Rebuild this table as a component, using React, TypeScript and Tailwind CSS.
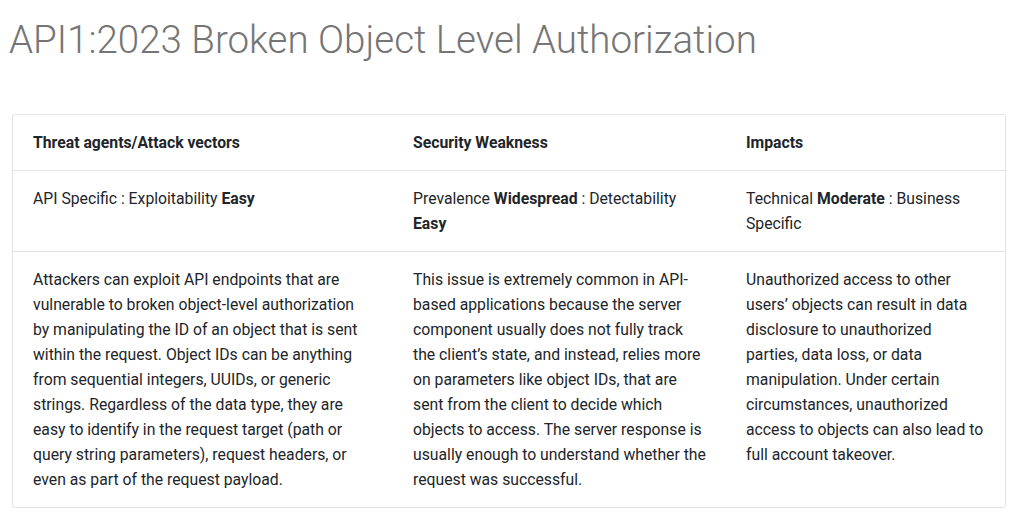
export default function App() {
  return (
    <div className="min-h-screen bg-white font-['Roboto',sans-serif] text-[#212529]">
      <h1 className="pl-[9px] pt-[16px] text-[38.5px] leading-[48px] font-light text-[#757575]">
        API1:2023 Broken Object Level Authorization
      </h1>
      <div className="ml-[12px] mt-[50px] w-[994px] rounded-[3px] border border-[#e3e3e3] text-[15.75px] leading-[25px]">
        <div className="grid grid-cols-[380px_333px_1fr] border-b border-[#e3e3e3]">
          <div className="px-[20px] py-[15px] font-bold">Threat agents/Attack vectors</div>
          <div className="pl-[20px] pr-[19px] py-[15px] font-bold">Security Weakness</div>
          <div className="px-[20px] py-[15px] font-bold">Impacts</div>
        </div>
        <div className="grid grid-cols-[380px_333px_1fr] border-b border-[#e3e3e3]">
          <div className="px-[20px] py-[15px]">
            API Specific : Exploitability <b>Easy</b>
          </div>
          <div className="pl-[20px] pr-[19px] py-[15px]">
            Prevalence <b>Widespread</b> : Detectability <b>Easy</b>
          </div>
          <div className="px-[20px] py-[15px]">
            Technical <b>Moderate</b> : Business Specific
          </div>
        </div>
        <div className="grid grid-cols-[380px_333px_1fr]">
          <div className="px-[20px] py-[15px]">
            Attackers can exploit API endpoints that are vulnerable to broken object-level authorization
            by manipulating the ID of an object that is sent within the request. Object IDs can be anything
            from sequential integers, UUIDs, or generic strings. Regardless of the data type, they are easy
            to identify in the request target (path or query string parameters), request headers, or even as
            part of the request payload.
          </div>
          <div className="pl-[20px] pr-[19px] py-[15px]">
            This issue is extremely common in API-based applications because the server component usually
            does not fully track the client’s state, and instead, relies more on parameters like object IDs,
            that are sent from the client to decide which objects to access. The server response is usually
            enough to understand whether the request was successful.
          </div>
          <div className="px-[20px] py-[15px]">
            Unauthorized access to other users’ objects can result in data disclosure to unauthorized
            parties, data loss, or data manipulation. Under certain circumstances, unauthorized access to
            objects can also lead to full account takeover.
          </div>
        </div>
      </div>
    </div>
  );
}
